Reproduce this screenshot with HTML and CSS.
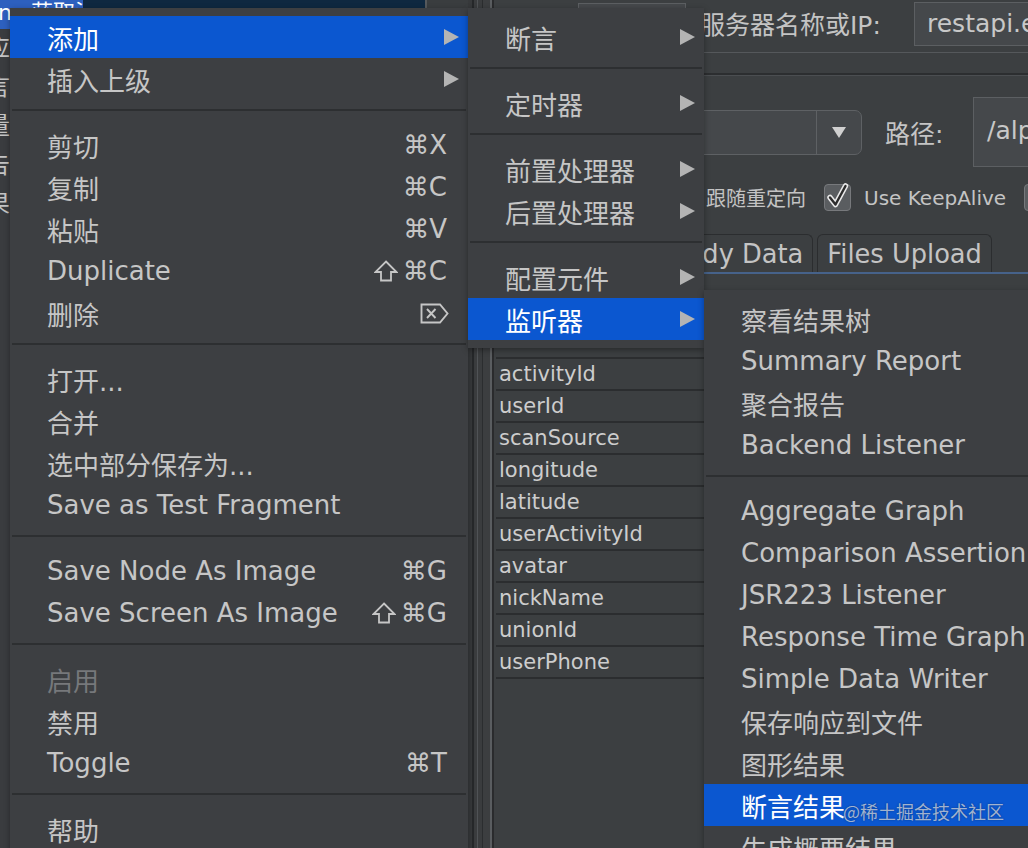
FILE: index.html
```html
<!DOCTYPE html>
<html lang="zh-CN">
<head>
<meta charset="utf-8">
<title>JMeter 右键菜单</title>
<link rel="stylesheet" href="styles.css">
</head>
<body>
<div class="app">
  <aside class="tree">
    <div class="tree-sel">
      <div class="sel-blue">nc 获取活动</div>
      <div class="sel-navy"></div>
      <div class="sel-rest"></div>
    </div>
    <ul class="tree-list">
      <li>响应</li>
      <li>断言</li>
      <li>变量</li>
      <li>报告</li>
      <li>结果</li>
    </ul>
  </aside>
  <div class="splitter"></div>
  <main class="panel">
    <div class="row-server">
      <div class="field proto"></div>
      <span class="server-label">服务器名称或IP:</span>
      <div class="field server-field">restapi.example.com</div>
    </div>
    <div class="group">
      <div class="row-path">
        <div class="combo">
          <span class="combo-val"></span>
          <span class="combo-btn"><span class="tri-down"></span></span>
        </div>
        <span class="path-label">路径:</span>
        <div class="field path-field">/alpha/activity/scan</div>
      </div>
      <div class="row-check">
        <span class="opt">
          <span class="cb"></span>
          <span>跟随重定向</span>
        </span>
        <span class="opt">
          <span class="cb"><svg width="25" height="25" viewBox="0 0 25 25"><path d="M5 12.5 L10.5 19.5 L20.5 1" fill="none" stroke="#e9e9e9" stroke-width="5.5" stroke-linecap="round" stroke-linejoin="round"/><path d="M5 12.5 L10.5 19.5 L20.5 1" fill="none" stroke="#2c2c2c" stroke-width="2.4" stroke-linecap="round" stroke-linejoin="round"/></svg></span>
          <span>Use KeepAlive</span>
        </span>
        <span class="opt">
          <span class="cb"></span>
        </span>
      </div>
      <div class="tabs">
        <div class="tab">Body Data</div>
        <div class="tab">Files Upload</div>
      </div>
      <div class="params">
        <div class="params-head"></div>
        <div class="params-row">activityId</div>
        <div class="params-row">userId</div>
        <div class="params-row">scanSource</div>
        <div class="params-row">longitude</div>
        <div class="params-row">latitude</div>
        <div class="params-row">userActivityId</div>
        <div class="params-row">avatar</div>
        <div class="params-row">nickName</div>
        <div class="params-row">unionId</div>
        <div class="params-row">userPhone</div>
        <div class="params-end"></div>
      </div>
    </div>
  </main>
</div>

<div class="menu menu-main">
  <div class="mi active"><span>添加</span><span class="arrow"></span></div>
  <div class="mi"><span>插入上级</span><span class="arrow"></span></div>
  <div class="sep"></div>
  <div class="mi"><span>剪切</span><span class="key">⌘X</span></div>
  <div class="mi"><span>复制</span><span class="key">⌘C</span></div>
  <div class="mi"><span>粘贴</span><span class="key">⌘V</span></div>
  <div class="mi"><span>Duplicate</span><span class="key"><svg class="shift" width="24" height="22" viewBox="0 0 24 22"><path d="M12 1.5 L22.5 12 H17 V20.5 H7 V12 H1.5 Z" fill="none" stroke="#c6c6c6" stroke-width="1.8" stroke-linejoin="miter"/></svg>⌘C</span></div>
  <div class="mi"><span>删除</span><svg class="key del" width="29" height="21" viewBox="0 0 29 21"><path d="M1.5 1.5H20L27.5 10.5L20 19.5H1.5Z" fill="none" stroke="#c6c6c6" stroke-width="1.9"/><path d="M7 6L15.5 15M15.5 6L7 15" stroke="#c6c6c6" stroke-width="1.9"/></svg></div>
  <div class="sep"></div>
  <div class="mi"><span>打开...</span></div>
  <div class="mi"><span>合并</span></div>
  <div class="mi"><span>选中部分保存为...</span></div>
  <div class="mi"><span>Save as Test Fragment</span></div>
  <div class="sep"></div>
  <div class="mi"><span>Save Node As Image</span><span class="key">⌘G</span></div>
  <div class="mi"><span>Save Screen As Image</span><span class="key"><svg class="shift" width="24" height="22" viewBox="0 0 24 22"><path d="M12 1.5 L22.5 12 H17 V20.5 H7 V12 H1.5 Z" fill="none" stroke="#c6c6c6" stroke-width="1.8" stroke-linejoin="miter"/></svg>⌘G</span></div>
  <div class="sep"></div>
  <div class="mi disabled"><span>启用</span></div>
  <div class="mi"><span>禁用</span></div>
  <div class="mi"><span>Toggle</span><span class="key">⌘T</span></div>
  <div class="sep"></div>
  <div class="mi"><span>帮助</span></div>
</div>

<div class="menu menu-add">
  <div class="mi"><span>断言</span><span class="arrow"></span></div>
  <div class="sep"></div>
  <div class="mi"><span>定时器</span><span class="arrow"></span></div>
  <div class="sep"></div>
  <div class="mi"><span>前置处理器</span><span class="arrow"></span></div>
  <div class="mi"><span>后置处理器</span><span class="arrow"></span></div>
  <div class="sep"></div>
  <div class="mi"><span>配置元件</span><span class="arrow"></span></div>
  <div class="mi active"><span>监听器</span><span class="arrow"></span></div>
</div>

<div class="menu menu-listen">
  <div class="mi"><span>察看结果树</span></div>
  <div class="mi"><span>Summary Report</span></div>
  <div class="mi"><span>聚合报告</span></div>
  <div class="mi"><span>Backend Listener</span></div>
  <div class="sep"></div>
  <div class="mi"><span>Aggregate Graph</span></div>
  <div class="mi"><span>Comparison Assertion Visualizer</span></div>
  <div class="mi"><span>JSR223 Listener</span></div>
  <div class="mi"><span>Response Time Graph</span></div>
  <div class="mi"><span>Simple Data Writer</span></div>
  <div class="mi"><span>保存响应到文件</span></div>
  <div class="mi"><span>图形结果</span></div>
  <div class="mi active"><span>断言结果</span></div>
  <div class="mi"><span>生成概要结果</span></div>
</div>

<div class="watermark">@稀土掘金技术社区</div>
</body>
</html>
```

FILE: styles.css
```css
* { box-sizing: border-box; }

html, body { margin: 0; padding: 0; }

body {
  width: 1028px;
  height: 848px;
  overflow: hidden;
  position: relative;
  background: #3c3f41;
  color: #c4c4c4;
  font-family: "DejaVu Sans", "Noto Sans CJK SC", sans-serif;
}

.app {
  display: flex;
  height: 848px;
}

/* ---------- tree (left, mostly covered) ---------- */
.tree {
  width: 468px;
  flex: none;
  background: #3a3c3f;
  overflow: hidden;
}

.tree-sel {
  display: flex;
  height: 29px;
}

.sel-blue {
  width: 83px;
  flex: none;
  background: #2d60bf;
  color: #ffffff;
  font-size: 22px;
  line-height: 26px;
  white-space: nowrap;
  overflow: hidden;
  text-indent: -2px;
}

.sel-navy {
  width: 342px;
  flex: none;
  background: #0f2840;
}

.sel-rest {
  flex: 1;
  background: #3a3d3f;
  border-left: 2px solid #56595c;
}

.tree-list {
  list-style: none;
  margin: 0;
  padding: 0;
}

.tree-list li {
  height: 39px;
  line-height: 39px;
  font-size: 24px;
  margin-left: -38px;
  white-space: nowrap;
  color: #c4c4c4;
}

.splitter {
  width: 28px;
  flex: none;
  background: linear-gradient(to right,
    #37393b 0 4px, #26282a 4px 6px, #3a3c3e 6px 9px, #505356 9px 10px,
    #3a3c3e 10px 14px, #2b2d2f 14px 15px, #3c3e40 15px 22px,
    #5a5d60 22px 24px, #2a2b2d 24px 26px, #3c3f41 26px);
}

/* ---------- right panel ---------- */
.panel {
  flex: 1;
  min-width: 0;
  overflow: hidden;
  display: flex;
  flex-direction: column;
  font-size: 25px;
}

.field {
  background: #45484b;
  border: 1px solid #5c5f62;
  color: #c8c8c8;
  white-space: nowrap;
  overflow: hidden;
}

.row-server {
  height: 53px;
  flex: none;
  display: flex;
  align-items: flex-start;
  padding-left: 82px;
  border-bottom: 1px solid #55585b;
}

.proto {
  width: 108px;
  height: 44px;
  margin-top: 3px;
  flex: none;
}

.server-label {
  flex: 0 0 214px;
  margin-left: 14px;
  line-height: 52px;
  white-space: nowrap;
}

.server-field {
  flex: none;
  width: 220px;
  height: 44px;
  margin-top: 2px;
  padding-left: 12px;
  line-height: 41px;
}

.group {
  margin-top: 20px;
  border-top: 2px solid #2c2e30;
  box-shadow: inset 0 1px 0 #4b4e51;
  flex: 1;
  display: flex;
  flex-direction: column;
}

.row-path {
  margin-top: 22px;
  height: 70px;
  flex: none;
  display: flex;
  align-items: center;
  padding-left: 104px;
}

.combo {
  width: 262px;
  height: 45px;
  flex: none;
  display: flex;
  border: 1px solid #5e6164;
  border-radius: 7px;
  background: #45484b;
}

.combo-val {
  flex: 1;
  border-right: 1px solid #5e6164;
}

.combo-btn {
  width: 44px;
  flex: none;
  display: flex;
  align-items: center;
  justify-content: center;
}

.tri-down {
  width: 0;
  height: 0;
  border-left: 7px solid transparent;
  border-right: 7px solid transparent;
  border-top: 11px solid #d0d0d0;
}

.path-label {
  flex: 0 0 88px;
  margin-left: 23px;
  white-space: nowrap;
}

.path-field {
  width: 200px;
  height: 70px;
  flex: none;
  padding-left: 13px;
  line-height: 66px;
}

.row-check {
  margin-top: 17px;
  height: 27px;
  flex: none;
  display: flex;
  align-items: center;
  gap: 18px;
  padding-left: 170px;
  font-size: 20px;
  white-space: nowrap;
}

.opt {
  display: flex;
  align-items: center;
  gap: 13px;
  flex: none;
}

.cb {
  width: 27px;
  height: 27px;
  flex: none;
  border: 1px solid #77797c;
  border-radius: 4px;
  background: #5a5d60;
}

.cb svg {
  display: block;
  overflow: visible;
}

.tabs {
  margin-top: 23px;
  height: 40px;
  flex: none;
  display: flex;
  align-items: flex-end;
  gap: 4px;
  padding-left: 163px;
  border-bottom: 2px solid #46628a;
}

.tab {
  height: 38px;
  padding: 0 9px;
  border: 1px solid #2b2d2f;
  border-bottom: none;
  border-radius: 6px 6px 0 0;
  font-size: 25.7px;
  line-height: 38px;
  white-space: nowrap;
}

.params {
  flex: none;
}

.params-head {
  height: 83px;
}

.params-row {
  height: 32px;
  border-top: 2px solid #2b2d2f;
  font-size: 21px;
  line-height: 30px;
  padding-left: 3px;
  color: #cdcdcd;
  white-space: nowrap;
}

.params-end {
  border-top: 2px solid #2b2d2f;
}

/* ---------- popup menus ---------- */
.menu {
  position: absolute;
  background: #3d3f42;
  padding: 8px 0;
  font-size: 26px;
  color: #c6c6c6;
  box-shadow: 0 2px 6px rgba(0, 0, 0, 0.35);
}

.menu-main {
  left: 10px;
  top: 8px;
  width: 458px;
  height: 870px;
  z-index: 1;
}

.menu-add {
  left: 468px;
  top: 8px;
  width: 236px;
  z-index: 2;
}

.menu-listen {
  left: 704px;
  top: 290px;
  width: 420px;
  z-index: 3;
}

.mi {
  height: 42px;
  display: flex;
  align-items: center;
  padding: 0 21px 0 37px;
  white-space: nowrap;
}

.mi.active {
  background: #0b57d0;
  color: #ffffff;
}

.mi.disabled {
  color: #76787b;
}

.key {
  margin-left: auto;
  display: flex;
  align-items: center;
}

.shift {
  display: block;
  margin-right: 5px;
}

.del {
  display: block;
  margin-right: -2px;
}

.arrow {
  margin-left: auto;
  margin-right: -12px;
  width: 0;
  height: 0;
  border-top: 8px solid transparent;
  border-bottom: 8px solid transparent;
  border-left: 15px solid #b4b4b4;
}

.sep {
  height: 24px;
  padding: 9px 2px 0;
}

.sep::before {
  content: "";
  display: block;
  height: 2px;
  background: #2d2f31;
}

.watermark {
  position: absolute;
  left: 843px;
  top: 798px;
  z-index: 4;
  font-family: "Noto Sans CJK SC", sans-serif;
  font-size: 18px;
  color: rgba(205, 210, 220, 0.78);
  text-shadow: 0 0 2px rgba(0, 0, 0, 0.35);
  white-space: nowrap;
}
```
